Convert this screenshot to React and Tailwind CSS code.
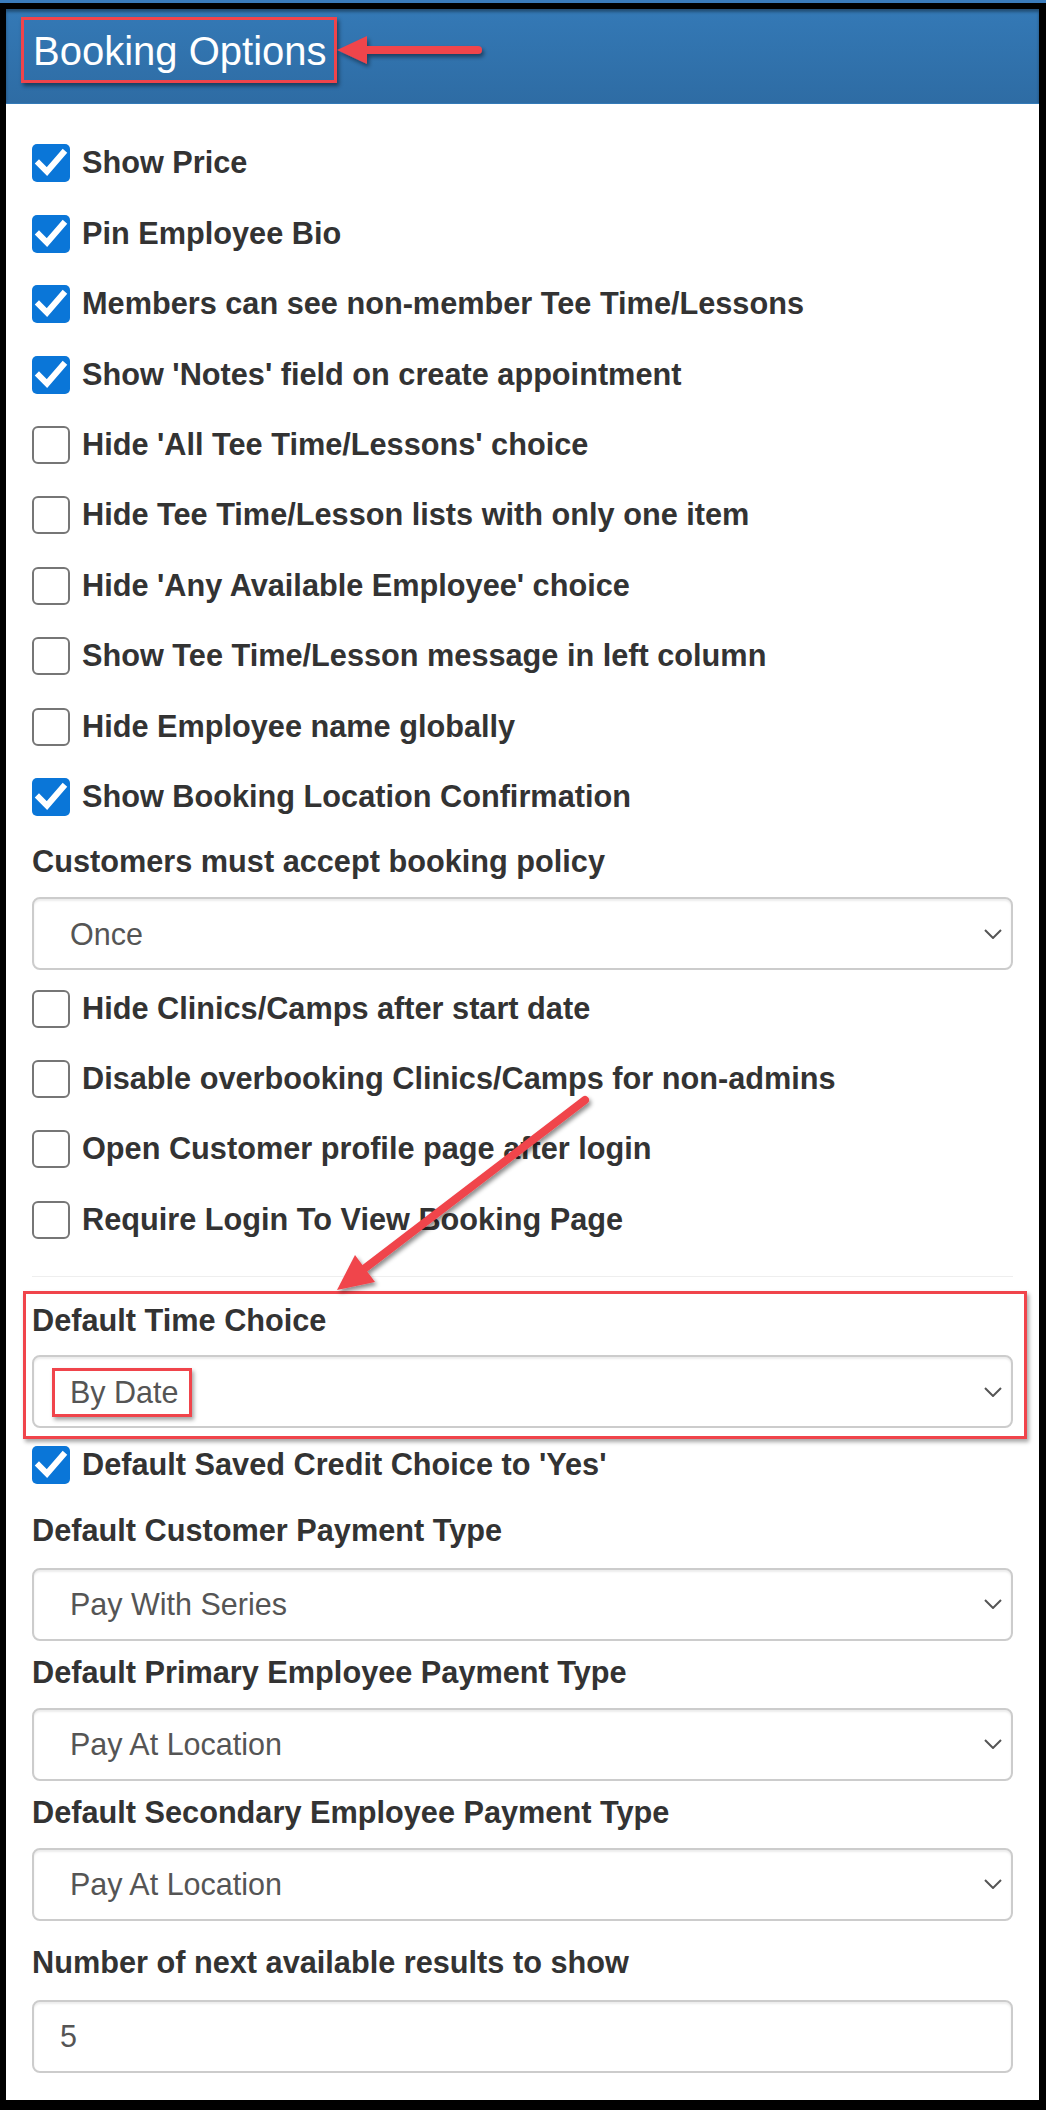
import React from "react";

const FONT = { fontFamily: '"Liberation Sans", Arial, sans-serif' };

function Check({ checked }) {
  if (checked) {
    return (
      <div className="w-[38px] h-[38px] shrink-0 rounded-[5px] bg-[#0a76d8] flex items-center justify-center">
        <svg width="38" height="38" viewBox="0 0 38 38">
          <polyline points="7,19.5 15,27.5 31,9" fill="none" stroke="#fff" strokeWidth="6" strokeLinecap="square" strokeLinejoin="miter" />
        </svg>
      </div>
    );
  }
  return <div className="w-[38px] h-[38px] shrink-0 rounded-[6px] border-2 border-[#767676] bg-white" />;
}

function Row({ checked, label }) {
  return (
    <div className="h-[70.45px] flex items-center gap-[12px]">
      <Check checked={checked} />
      <span className="text-[30.7px] leading-[34px] font-bold text-[#333]">{label}</span>
    </div>
  );
}

function Label({ children, className }) {
  return <div className={"text-[30.7px] leading-[34px] font-bold text-[#333] " + className}>{children}</div>;
}

function Select({ value, className }) {
  return (
    <div className={"h-[73px] border-2 border-[#cccccc] rounded-[8px] bg-white shadow-[inset_0_2px_2px_rgba(0,0,0,0.075)] flex items-center justify-between pl-[36px] pr-[9px] " + className}>
      <span className="text-[30.5px] leading-[34px] text-[#555]">{value}</span>
      <svg width="18" height="10" viewBox="0 0 18 10">
        <polyline points="1,1 9,9 17,1" fill="none" stroke="#555" strokeWidth="2" />
      </svg>
    </div>
  );
}

export default function App() {
  return (
    <div className="w-[1046px] h-[2110px] bg-black relative overflow-hidden" style={FONT}>
      <div className="h-[3px] bg-[#3a7cbc]" />
      <div className="h-[6px]" />
      <div className="ml-[6px] w-[1033px] h-[2091px] bg-white flex flex-col">
        <div className="h-[95px] bg-gradient-to-b from-[#3479b6] to-[#2e6ca4] shadow-[inset_0_3px_3px_rgba(0,0,0,0.35)] border-b border-[#337ab7] pl-[27px] pt-[19px]">
          <div className="text-[40px] leading-[46px] text-white">Booking Options</div>
        </div>
        <div className="px-[26px] pt-[24px] flex flex-col">
          <Row checked label="Show Price" />
          <Row checked label="Pin Employee Bio" />
          <Row checked label="Members can see non-member Tee Time/Lessons" />
          <Row checked label="Show 'Notes' field on create appointment" />
          <Row label="Hide 'All Tee Time/Lessons' choice" />
          <Row label="Hide Tee Time/Lesson lists with only one item" />
          <Row label="Hide 'Any Available Employee' choice" />
          <Row label="Show Tee Time/Lesson message in left column" />
          <Row label="Hide Employee name globally" />
          <Row checked label="Show Booking Location Confirmation" />
          <Label className="mt-[13px]">Customers must accept booking policy</Label>
          <Select value="Once" className="mt-[18px]" />
          <div className="mt-[3px]">
            <Row label="Hide Clinics/Camps after start date" />
            <Row label="Disable overbooking Clinics/Camps for non-admins" />
            <Row label="Open Customer profile page after login" />
            <Row label="Require Login To View Booking Page" />
          </div>
          <div className="mt-[21px] h-[1px] bg-[#eeeeee]" />
          <Label className="mt-[27px]">Default Time Choice</Label>
          <Select value="By Date" className="mt-[17px]" />
          <div className="mt-[2px]">
            <Row checked label="Default Saved Credit Choice to 'Yes'" />
          </div>
          <Label className="mt-[13px]">Default Customer Payment Type</Label>
          <Select value="Pay With Series" className="mt-[20px]" />
          <Label className="mt-[15px]">Default Primary Employee Payment Type</Label>
          <Select value="Pay At Location" className="mt-[18px]" />
          <Label className="mt-[15px]">Default Secondary Employee Payment Type</Label>
          <Select value="Pay At Location" className="mt-[18px]" />
          <Label className="mt-[25px]">Number of next available results to show</Label>
          <div className="mt-[20px] h-[73px] border-2 border-[#cccccc] rounded-[8px] bg-white shadow-[inset_0_2px_2px_rgba(0,0,0,0.075)] flex items-center pl-[26px]">
            <span className="text-[30.5px] leading-[34px] text-[#555]">5</span>
          </div>
        </div>
      </div>

      {/* annotation boxes */}
      <div className="absolute left-[21px] top-[17px] w-[316px] h-[66px] border-[3px] border-[#f0444b] shadow-[2px_3px_4px_rgba(0,0,0,0.45)]" />
      <div className="absolute left-[23px] top-[1291px] w-[1004px] h-[148px] border-[3px] border-[#f0444b] shadow-[2px_3px_4px_rgba(0,0,0,0.35)]" />
      <div className="absolute left-[52px] top-[1368px] w-[140px] h-[49px] border-[3px] border-[#f0444b] shadow-[2px_3px_4px_rgba(0,0,0,0.35)]" />

      {/* arrows */}
      <svg className="absolute left-0 top-0" width="1046" height="2110" viewBox="0 0 1046 2110">
        <defs>
          <filter id="ds" x="-20%" y="-20%" width="140%" height="140%">
            <feDropShadow dx="2" dy="3" stdDeviation="2" floodColor="#000" floodOpacity="0.45" />
          </filter>
        </defs>
        <g filter="url(#ds)">
          <line x1="478" y1="50" x2="362" y2="50" stroke="#f0444b" strokeWidth="8" strokeLinecap="round" />
          <polygon points="337,50 367,36 367,64" fill="#f0444b" />
        </g>
        <g filter="url(#ds)">
          <line x1="585" y1="1100" x2="360" y2="1272" stroke="#f0444b" strokeWidth="8" strokeLinecap="round" />
          <polygon points="337,1290 375,1282 355,1255" fill="#f0444b" />
        </g>
      </svg>
    </div>
  );
}
